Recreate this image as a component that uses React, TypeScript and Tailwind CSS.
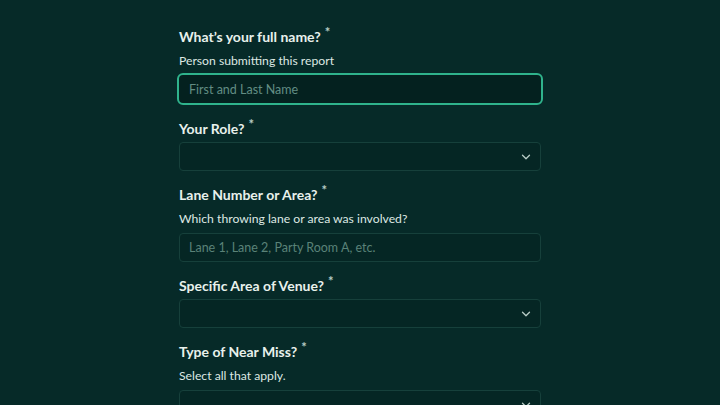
import { ChevronDown } from "lucide-react";

function Label({ text }: { text: string }) {
  return (
    <div className="flex h-5 items-center text-[14px] font-bold leading-5 text-[#e8f1ec]">
      <span>{text}</span>
      <span className="ml-[4px] -mt-[10px] text-[13px] text-[#b9cdc6]">*</span>
    </div>
  );
}

function Desc({ text }: { text: string }) {
  return <div className="mt-[5px] h-[18px] text-[12.2px] leading-[18px] text-[#dde8e3]">{text}</div>;
}

function TextInput({ placeholder, focused }: { placeholder: string; focused?: boolean }) {
  return (
    <input
      placeholder={placeholder}
      className={
        focused
          ? "mt-[3px] h-[32px] w-[366px] rounded-[6px] border-2 border-[#2fb38c] bg-[#04211f] px-[10px] text-[12.5px] text-[#dde8e3] outline-none placeholder:text-[#628d83]"
          : "mt-[5px] ml-[2px] h-[29px] w-[362px] rounded-[4px] border border-[#16403b] bg-[#052624] px-[9px] text-[12.5px] text-[#dde8e3] outline-none placeholder:text-[#5a8278]"
      }
    />
  );
}

function Select({ gap }: { gap: string }) {
  return (
    <div className={`${gap} ml-[2px] flex h-[29px] w-[362px] items-center justify-end rounded-[4px] border border-[#16403b] bg-[#052624] pr-[7px]`}>
      <ChevronDown size={14} strokeWidth={2.2} className="text-[#b8ccc6]" />
    </div>
  );
}

export default function App() {
  return (
    <div className="h-[405px] w-[720px] overflow-hidden bg-[#062a28]" style={{ fontFamily: "Lato, 'Noto Sans', sans-serif" }}>
      <div className="ml-[177px] w-[366px] pt-[27px]">
        <div className="pl-[2px]">
          <Label text="What’s your full name?" />
          <Desc text="Person submitting this report" />
        </div>
        <TextInput placeholder="First and Last Name" focused />

        <div className="mt-[14px] pl-[2px]">
          <Label text="Your Role?" />
        </div>
        <Select gap="mt-[3px]" />

        <div className="mt-[14px] pl-[2px]">
          <Label text="Lane Number or Area?" />
          <Desc text="Which throwing lane or area was involved?" />
        </div>
        <TextInput placeholder="Lane 1, Lane 2, Party Room A, etc." />

        <div className="mt-[14px] pl-[2px]">
          <Label text="Specific Area of Venue?" />
        </div>
        <Select gap="mt-[3px]" />

        <div className="mt-[14px] pl-[2px]">
          <Label text="Type of Near Miss?" />
          <Desc text="Select all that apply." />
        </div>
        <Select gap="mt-[5px]" />
      </div>
    </div>
  );
}
